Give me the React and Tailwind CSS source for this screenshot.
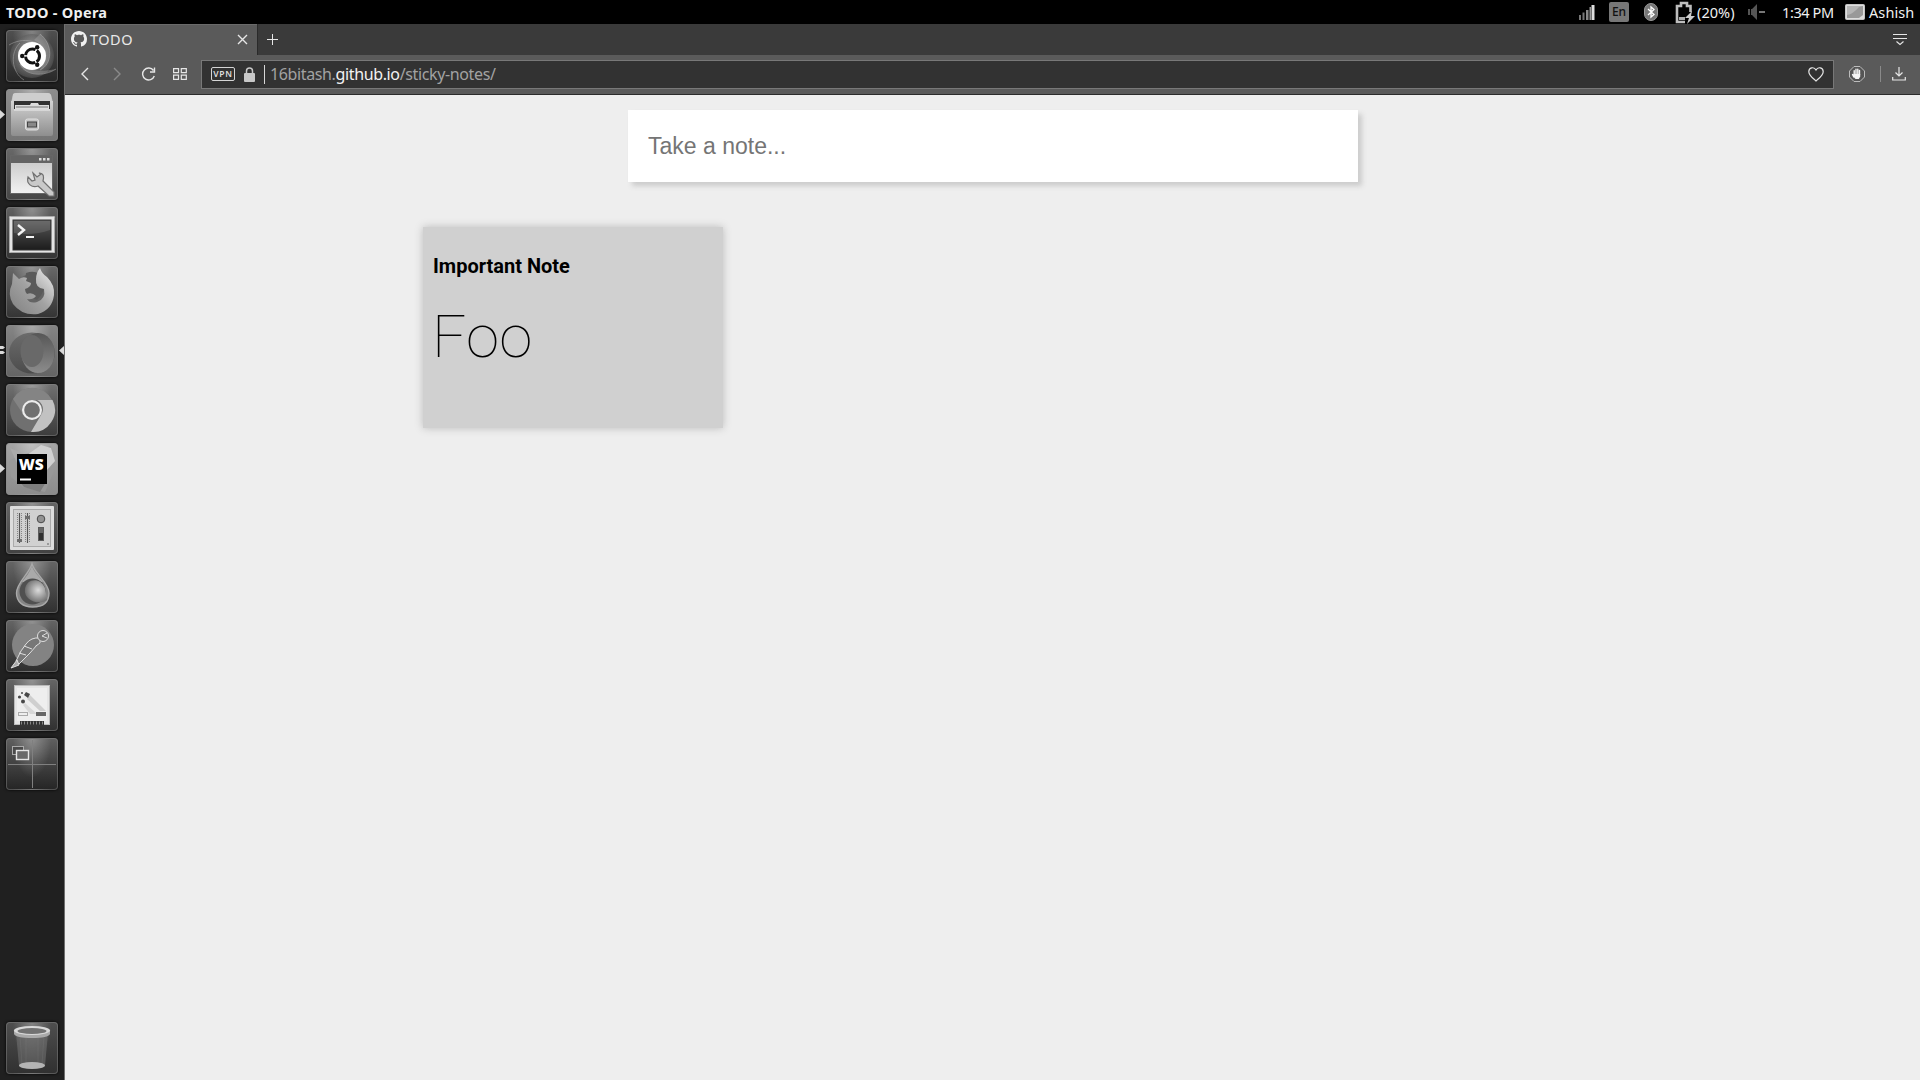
import React from 'react';

const UI = "font-['Noto_Sans','Open_Sans',sans-serif]";

function Defs() {
  return (
    <svg className="absolute w-0 h-0" aria-hidden="true">
      <defs>
        <linearGradient id="metal" x1="0" y1="0" x2="0" y2="1">
          <stop offset="0" stopColor="#d2d2d2" />
          <stop offset="0.5" stopColor="#b0b0b0" />
          <stop offset="1" stopColor="#8e8e8e" />
        </linearGradient>
        <linearGradient id="paper" x1="0" y1="0" x2="0" y2="1">
          <stop offset="0" stopColor="#c4c4c4" />
          <stop offset="1" stopColor="#f2f2f2" />
        </linearGradient>
        <linearGradient id="dark" x1="0" y1="0" x2="0" y2="1">
          <stop offset="0" stopColor="#585858" />
          <stop offset="1" stopColor="#1c1c1c" />
        </linearGradient>
        <linearGradient id="fox" x1="0" y1="1" x2="1" y2="0">
          <stop offset="0" stopColor="#808080" />
          <stop offset="0.5" stopColor="#a2a2a2" />
          <stop offset="1" stopColor="#f0f0f0" />
        </linearGradient>
        <linearGradient id="opera" x1="0" y1="0" x2="0" y2="1">
          <stop offset="0" stopColor="#6c6c6c" />
          <stop offset="1" stopColor="#4c4c4c" />
        </linearGradient>
        <linearGradient id="operaIn" x1="0" y1="0" x2="0" y2="1">
          <stop offset="0" stopColor="#565656" />
          <stop offset="1" stopColor="#8c8c8c" />
        </linearGradient>
        <radialGradient id="swirl" cx="0.5" cy="0.5" r="0.6">
          <stop offset="0.4" stopColor="#a8a8a8" />
          <stop offset="1" stopColor="#3c3c3c" />
        </radialGradient>
        <radialGradient id="drop" cx="0.6" cy="0.45" r="0.6">
          <stop offset="0" stopColor="#dcdcdc" />
          <stop offset="1" stopColor="#6c6c6c" />
        </radialGradient>
      </defs>
    </svg>
  );
}

const glyphs = {
  dash: (
    <>
      <circle cx="26" cy="26" r="22" fill="url(#swirl)" opacity="0.55" />
      <g fill="none" stroke="#b5b5b5" strokeWidth="0.8" opacity="0.6">
        <path d="M3 15C16 7 36 9 40 26" />
        <path d="M34 4C47 14 47 34 34 40" />
        <path d="M50 39C38 47 19 46 14 34" />
        <path d="M18 50C5 42 4 22 14 13" />
      </g>
      <path d="M34 4C47 14 47 34 34 40C42 28 42 18 28 10Z" fill="#aaa" opacity="0.4" />
      <path d="M50 39C38 47 19 46 14 34C24 42 36 42 50 39Z" fill="#999" opacity="0.45" />
      <circle cx="26" cy="26" r="14" fill="#fff" />
      <circle cx="26.500" cy="26" r="7" fill="none" stroke="#111" strokeWidth="3" strokeDasharray="13.200 1.460" strokeDashoffset="6.600" />
      <g fill="#111">
        <circle cx="16.200" cy="26" r="2.200" />
        <circle cx="31.200" cy="17.300" r="2.200" />
        <circle cx="31.200" cy="34.700" r="2.200" />
      </g>
    </>
  ),
  files: (
    <>
      <path d="M7 6Q8 4 10 4H42Q44 4 45 6L47 13V22H5V13Z" fill="#b8b8b8" />
      <path d="M7 5Q8 4 10 4H42Q44 4 45 6L46 12H6Z" fill="#cecece" />
      <rect x="8" y="12" width="36" height="9" fill="#303030" />
      <path d="M9 16H24L25 14H32L33 16H43V21H9Z" fill="#dcdcdc" />
      <path d="M10 18H42" stroke="#777" />
      <path d="M5 12H8V20H44V12H47V45Q47 47 45 47H7Q5 47 5 45Z" fill="url(#metal)" />
      <path d="M8 21H44" stroke="#eee" />
      <rect x="19.500" y="30" width="13" height="11" rx="2" fill="#c4c4c4" stroke="#e0e0e0" />
      <rect x="21.500" y="33" width="9" height="5" fill="#888" stroke="#444" />
    </>
  ),
  settings: (
    <>
      <rect x="4.500" y="7.500" width="42" height="38" fill="url(#paper)" stroke="#666" />
      <rect x="5" y="8" width="41" height="7" fill="#636363" />
      <g fill="#ddd">
        <rect x="33" y="10" width="2.500" height="2.500" />
        <rect x="37" y="10" width="2.500" height="2.500" />
        <rect x="41" y="10" width="2.500" height="2.500" />
      </g>
      <path d="M27 25L31 29L35 26L33 25C38 25 38 29 37 33L48 44V48H43L32 38C26 40 20 36 22 29L26 33L29 32Z" fill="#c9c9c9" stroke="#707070" strokeWidth="1.200" />
    </>
  ),
  terminal: (
    <>
      <rect x="3" y="9" width="46" height="37" rx="1.500" fill="#e4e4e4" />
      <rect x="3.500" y="9.500" width="45" height="36" rx="1" fill="none" stroke="#a9a9a9" />
      <rect x="7" y="13" width="38" height="30" fill="url(#dark)" stroke="#333" />
      <path d="M8 14H44V23Q28 29 8 26Z" fill="#fff" opacity="0.12" />
      <path d="M12 18L18 23L12 28" fill="none" stroke="#f4f4f4" strokeWidth="2.400" />
      <path d="M20 30H28" stroke="#f4f4f4" strokeWidth="2" />
    </>
  ),
  firefox: (
    <>
      <circle cx="26" cy="27" r="19" fill="#646464" />
      <path d="M20 7Q32 3 38 13Q40 26 31 34Q19 31 18 20Z" fill="#5a5a5a" />
      <path d="M7 7L13 13Q17 10 21 12L20 15L25 17Q25 21 19 23Q19 26 21 28Q26 26 30 30Q27 34 21 33Q24 38 31 36Q40 33 38 23Q29 22 30 13Q30 7 34 2Q36 8 41 11Q49 19 48 29Q46 44 32 48Q16 50 7 38Q1 28 6 18Z" fill="url(#fox)" />
    </>
  ),
  opera: (
    <>
      <ellipse cx="26" cy="28" rx="23" ry="20.500" fill="url(#opera)" />
      <ellipse cx="32" cy="28" rx="16.500" ry="20" fill="url(#operaIn)" />
      <ellipse cx="26" cy="26" rx="11.500" ry="16" fill="#696969" />
    </>
  ),
  chrome: (
    <>
      <circle cx="26" cy="26" r="22" fill="#707070" />
      <path d="M7 15A22 22 0 0 1 46 16H26A10 10 0 0 0 17 30Z" fill="#848484" />
      <path d="M46.500 16A22 22 0 0 1 25 48L35 31A10 10 0 0 0 31 16Z" fill="#c2c2c2" />
      <circle cx="26" cy="26" r="10" fill="#ececec" />
      <circle cx="26" cy="26" r="7.800" fill="#707070" />
    </>
  ),
  webstorm: (
    <>
      <path d="M3 18L14 12L29 9L45 3L48 28L39 49L17 44L5 34Z" fill="#999" />
      <path d="M21 12L35 2L45 5L49 18L41 27Z" fill="#d0d0d0" />
      <path d="M4 5L20 12L16 31Z" fill="#aaa" />
      <path d="M12 37L40 39L34 49L18 44Z" fill="#7d7d7d" />
      <rect x="11" y="11" width="30" height="30" fill="#000" />
      <text x="12.800" y="27" textLength="25" lengthAdjust="spacingAndGlyphs" fontFamily="Open Sans, sans-serif" fontWeight="800" fontSize="16" fill="#fff">WS</text>
      <path d="M14 36.500H25" stroke="#fff" strokeWidth="2" />
    </>
  ),
  mixer: (
    <>
      <rect x="4" y="4" width="44" height="44" rx="1" fill="#dcdcdc" />
      <rect x="7.500" y="7.500" width="37" height="37" fill="#d1d1d1" stroke="#aaa" />
      <g stroke="#858585" strokeDasharray="1 1" strokeWidth="5"><path d="M13.500 11V41M21.500 11V41" /></g>
      <path d="M13.500 11V41M21.500 11V41" stroke="#c8c8c8" strokeWidth="3" />
      <path d="M13.500 11V41M21.500 11V41" stroke="#555" />
      <path d="M11 37H16V40H11ZM19 14H24V17H19Z" fill="#6d6d6d" />
      <circle cx="35" cy="17" r="3.800" fill="#929292" stroke="#4a4a4a" />
      <rect x="32.500" y="25.500" width="5" height="13" fill="#303030" stroke="#5c5c5c" />
      <rect x="33" y="26" width="4" height="5" fill="#666" />
      <rect x="41" y="41" width="2" height="2" fill="#999" />
    </>
  ),
  drop: (
    <>
      <path d="M26 3C29 13 43 22 43 32C43 42 36 46 26.500 46C17 46 10.500 41 10.500 32C10.500 22 23 13 26 3Z" fill="#858585" stroke="#aaa" strokeWidth="1.400" />
      <path d="M26 5C28 12 34 16 37 21H16C20 16 24 11 26 5Z" fill="#aaa" />
      <circle cx="26.500" cy="30.500" r="13" fill="#505050" />
      <path d="M41 39C33 45 17 39 19 28C20 18 34 15 39 27" fill="url(#drop)" />
    </>
  ),
  postman: (
    <>
      <circle cx="27" cy="25" r="21" fill="#838383" />
      <g fill="#777" stroke="#dedede" strokeWidth="1">
        <path d="M34 18Q25 17 20 24L15 31L20 33L34 23Z" />
        <path d="M15 31L10 41L13 44L24 33L31 25" />
        <path d="M11 40L5 48L13 45Z" fill="#aaa" />
        <circle cx="37" cy="16" r="5.500" />
        <path d="M41 13L36 16L41 18M18 26L26 29M13 33L20 35" fill="none" />
      </g>
    </>
  ),
  image: (
    <>
      <rect x="8.500" y="6.500" width="35" height="39" fill="#e5e5e5" stroke="#bbb" />
      <rect x="11" y="9" width="30" height="33" fill="#eeeeee" />
      <path d="M24 16L40 32H34L21 20Z" fill="#cfcfcf" />
      <path d="M19 24L31 35H24L17 26Z" fill="#d8d8d8" />
      <g fill="#484848">
        <path d="M20 13L24 15L22 19L18 16Z" />
        <circle cx="13.500" cy="18" r="1.600" />
        <circle cx="17" cy="22.500" r="2" />
        <circle cx="16" cy="14" r="1" />
      </g>
      <rect x="12.500" y="33.500" width="9" height="3" fill="#eee" stroke="#aaa" />
      <rect x="30" y="33" width="10" height="4" fill="#666" />
      <rect x="14" y="42" width="24" height="4" fill="#333" />
      <path d="M15 44H37" stroke="#888" strokeWidth="3" strokeDasharray="1 2" />
    </>
  ),
  workspaces: (
    <>
      <path d="M26.500 2V50M2 26.500H50" stroke="#808080" />
      <rect x="6.500" y="8.500" width="11" height="8" fill="#4a4a4a" stroke="#aaa" />
      <rect x="10.500" y="12.500" width="12" height="9" fill="#696969" stroke="#e5e5e5" strokeWidth="1.400" />
    </>
  ),
  trash: (
    <>
      <path d="M10 11L13 44Q26 49 39 44L42 11Z" fill="#6e6e6e" opacity="0.6" />
      <path d="M14 14L16 42M20 14V42M32 14V42M38 14L36 42" stroke="#888" strokeWidth="0.500" opacity="0.400" />
      <ellipse cx="26" cy="43.500" rx="13" ry="3.500" fill="#b4b4b4" />
      <path d="M8 8V12Q10 16 26 16T44 12V8Z" fill="#a9a9a9" />
      <ellipse cx="26" cy="8.500" rx="18" ry="4.500" fill="#d8d8d8" />
      <ellipse cx="26" cy="9" rx="14.500" ry="3" fill="#727272" />
    </>
  ),
};

const launcher = [
  { name: 'dash', tone: 'from-[#505050] to-[#292929]' },
  { name: 'files', tone: 'from-[#8d8d8d] to-[#747474]', running: true },
  { name: 'settings', tone: 'from-[#686868] to-[#464646]' },
  { name: 'terminal', tone: 'from-[#626262] to-[#343434]' },
  { name: 'firefox', tone: 'from-[#696969] to-[#343434]' },
  { name: 'opera', tone: 'from-[#858585] to-[#646464]', active: true },
  { name: 'chrome', tone: 'from-[#717171] to-[#3c3c3c]' },
  { name: 'webstorm', tone: 'from-[#a5a5a5] to-[#8c8c8c]', running: true },
  { name: 'mixer', tone: 'from-[#656565] to-[#424242]' },
  { name: 'drop', tone: 'from-[#666666] to-[#303030]' },
  { name: 'postman', tone: 'from-[#656565] to-[#2e2e2e]' },
  { name: 'image', tone: 'from-[#666666] to-[#303030]' },
  { name: 'workspaces', tone: 'from-[#606060] to-[#252525]' },
];

function Tile({ name, tone, running, active }) {
  return (
    <div className={`relative h-[52px] w-[52px] shrink-0 rounded-[4px] bg-linear-to-b shadow-[0_0_3px_#000] ${tone}`}>
      <div className="absolute inset-0 rounded-[4px] border border-[#8a8a8a]/45 bg-[radial-gradient(ellipse_at_50%_0%,rgba(255,255,255,0.3),transparent_55%)]" />
      <svg className="relative block" width="52" height="52" viewBox="0 0 52 52">{glyphs[name]}</svg>
      {running && (
        <svg className="absolute -left-1.5 top-[21px]" width="5" height="9"><path d="M0 0L5 4.500L0 9Z" fill="#d9d9d9" /></svg>
      )}
      {active && (
        <>
          <svg className="absolute -left-1.5 top-[21px]" width="5" height="9"><path d="M0 0H3L5 1.500L3 3H0ZM0 5H3L5 6.500L3 8H0Z" fill="#d9d9d9" /></svg>
          <svg className="absolute left-[53px] top-[21px]" width="5" height="9"><path d="M5 0L0 4.500L5 9Z" fill="#d9d9d9" /></svg>
        </>
      )}
    </div>
  );
}

function TopPanel() {
  return (
    <header className={`flex h-6 w-full items-center bg-black text-[#f0f0f0] ${UI}`}>
      <h1 className="ml-1.5 flex-1 whitespace-nowrap text-[14.500px] font-bold leading-[23px] tracking-[0.28px]">TODO - Opera</h1>
      <svg width="16" height="16" viewBox="0 0 16 16" className="mr-3.5">
        <path d="M0 11H2V16H0Z" fill="#777" /><path d="M3.500 8.500H5.500V16H3.500Z" fill="#777" /><path d="M7 6H9.500V16H7Z" fill="#888" /><path d="M10.500 3H12V16H10.500Z" fill="#999" /><path d="M12.500 1H15.500V16H12.500Z" fill="#ddd" />
      </svg>
      <div className="mr-[15px] flex h-5 w-5 items-center justify-center rounded-[2px] bg-[#777] text-[12px] font-medium text-[#111]">En</div>
      <svg width="14" height="18" viewBox="0 0 14 18" className="mr-[17px]">
        <rect x="0.500" y="0.500" width="13" height="17" rx="6.500" fill="#777" stroke="#999" />
        <path d="M4 6L10 11.500L7 14V4L10 6.500L4 12" fill="none" stroke="#fff" strokeWidth="1.300" />
      </svg>
      <svg width="21" height="23" viewBox="0 0 21 23" className="mr-[2px]">
        <path d="M10 21H2V5H6V2H12V5H15.500V11" fill="none" stroke="#bdbdbd" strokeWidth="2.600" />
        <path d="M4 16H10V19H4Z" fill="#aaa" />
        <path d="M17 10L10 17H14L12 23L20 15H16Z" fill="#ccc" />
      </svg>
      <span className="-ml-px mr-[12px] w-[39px] whitespace-nowrap text-[14.500px] leading-6 tracking-[0.05px]">(20%)</span>
      <svg width="17" height="16" viewBox="0 0 17 16" className="mr-[17px]">
        <path d="M0 5H2V11H0ZM3 5H4L9 0V16L4 11H3Z" fill="#555" /><path d="M11 8H17" stroke="#777" strokeWidth="2" />
      </svg>
      <span className="mr-[11px] w-[52px] whitespace-nowrap text-[14.500px] leading-6 tracking-[-0.4px]">1:34 PM</span>
      <svg width="20" height="16" viewBox="0 0 20 16" className="mr-1">
        <rect x="0.500" y="0.500" width="19" height="15" rx="1" fill="#ddd" stroke="#c4c4c4" />
        <path d="M2 2H18V11L14 14H2Z" fill="#999" /><path d="M2 11Q8 10 14 3L18 2H2Z" fill="#b5b5b5" />
      </svg>
      <span className="mr-1.5 w-[45px] whitespace-nowrap text-[14.500px] leading-6 tracking-[0.1px]">Ashish</span>
    </header>
  );
}

const line = { fill: 'none', stroke: '#e6e6e6', strokeWidth: 1.4 };

function Browser() {
  return (
    <div className={UI}>
      <div className="flex h-[31px] items-center bg-[#3a3a3a]">
        <div className="flex h-full w-[192px] items-center border-t border-[#6a6a6a] bg-[#5a5a5a] pb-0.5">
          <svg className="ml-[6px]" width="16" height="16" viewBox="0 0 16 16" fill="#f0f0f0">
            <path d="M8 0C3.580 0 0 3.580 0 8c0 3.540 2.290 6.530 5.470 7.590.4.070.55-.17.55-.38 0-.19-.01-.82-.01-1.490-2.010.37-2.530-.49-2.690-.94-.09-.23-.48-.94-.82-1.130-.28-.15-.68-.52-.01-.53.63-.01 1.080.58 1.230.82.72 1.210 1.870.87 2.330.66.07-.52.28-.87.51-1.070-1.780-.2-3.640-.89-3.640-3.950 0-.87.31-1.590.82-2.150-.08-.2-.36-1.020.08-2.120 0 0 .67-.21 2.200.82.64-.18 1.320-.27 2-.27s1.360.09 2 .27c1.530-1.040 2.200-.82 2.200-.82.44 1.100.16 1.920.08 2.120.51.56.82 1.270.82 2.150 0 3.070-1.870 3.750-3.650 3.950.29.25.54.73.54 1.480 0 1.070-.01 1.930-.01 2.200 0 .21.15.46.55.38A8.010 8.010 0 0 0 16 8c0-4.420-3.580-8-8-8z" />
          </svg>
          <span className="ml-[3px] flex-1 text-[14.500px] leading-5 tracking-[0.5px] text-[#e9e9e9]">TODO</span>
          <svg className="mr-[9px]" width="11" height="11" viewBox="0 0 11 11" {...line}><path d="M1 1L10 10M10 1L1 10" /></svg>
        </div>
        <div className="h-full w-px bg-[#2a2a2a]" />
        <svg className="ml-[9px]" width="11" height="11" viewBox="0 0 11 11" {...line} strokeWidth="1"><path d="M5.500 0V11M0 5.500H11" /></svg>
        <svg className="ml-auto mr-[13px]" width="14" height="13" viewBox="0 0 14 13" {...line} strokeWidth="1.100"><path d="M0 1.500H14M0 5.500H14M3.500 8.500L7 11.500L10.500 8.500" /></svg>
      </div>
      <div className="flex h-10 items-center border-b border-[#2b2b2b] bg-[#5a5a5a] pb-px">
        <svg className="ml-4" width="8" height="14" viewBox="0 0 8 14" {...line}><path d="M7 1L1 7L7 13" /></svg>
        <svg className="ml-6" width="8" height="14" viewBox="0 0 8 14" {...line} stroke="#8a8a8a"><path d="M1 1L7 7L1 13" /></svg>
        <svg className="ml-[20px]" width="15" height="14" viewBox="0 0 15 14" {...line}><path d="M13.300 9A6 6 0 1 1 12.500 3.500M13.500 0.500V5H9" /></svg>
        <svg className="ml-[17px]" width="14" height="12" viewBox="0 0 14 12" {...line} strokeWidth="1.200"><path d="M.6.6H5.500V4.700H.6ZM8.300.6H13.300V4.700H8.300ZM.6 7.200H5.500V11.400H.6ZM8.300 7.200H13.300V11.400H8.300Z" /></svg>
        <div className="ml-[14px] flex h-[29px] w-[1633px] items-center border border-[#787878] bg-[#323232]">
          <div className="ml-[9px] flex h-[14px] w-6 items-center justify-center rounded-[2px] border border-[#d5d5d5] text-[8.500px] font-semibold tracking-[0.8px] text-[#dedede]">VPN</div>
          <svg className="ml-[9px]" width="11" height="15" viewBox="0 0 11 15"><rect y="6" width="11" height="9" rx="1" fill="#c8c8c8" /><path d="M2.500 7V4Q2.500 1 5.500 1T8.500 4V7" fill="none" stroke="#c8c8c8" strokeWidth="1.500" /></svg>
          <div className="ml-[9px] h-[19px] w-px bg-[#d6d6d6]" />
          <p className="ml-[5px] flex-1 whitespace-nowrap text-[16px] leading-6 tracking-[-0.37px] text-[#a2a2a2]">16bitash.<span className="text-[#f2f2f2]">github.io</span>/sticky-notes/</p>
          <svg className="mr-[9px]" width="16" height="15" viewBox="0 0 16 15" {...line} strokeWidth="1.200"><path d="M8 14C6 12 .8 8.500.8 4.700C.8.500 6-.7 8 3C10-.7 15.200.5 15.200 4.700C15.200 8.500 10 12 8 14Z" /></svg>
        </div>
        <svg className="ml-[15px]" width="16" height="16" viewBox="0 0 16 16">
          <path d="M5 .5H11L15.500 5V11L11 15.500H5L.5 11V5Z" fill="#555" stroke="#bcbcbc" />
          <g stroke="#f4f4f4" strokeLinecap="round" strokeWidth="1.400">
            <path d="M5.200 4.800V9M7 3.300V9M8.800 3.300V9M10.500 4.500V9M4.800 11L3.500 8.500" />
          </g>
          <path d="M4.500 8H11.200V10.500L9.800 13H6.500L4.300 10.500Z" fill="#f4f4f4" />
        </svg>
        <div className="ml-[15px] h-4 w-px bg-[#8a8a8a]" />
        <svg className="ml-[11px]" width="14" height="14" viewBox="0 0 14 14" {...line} strokeWidth="1.200"><path d="M7 0V9M3.500 5.500L7 9L10.500 5.500M.7 10V13H13.300V10" /></svg>
      </div>
    </div>
  );
}

export default function App() {
  return (
    <div className="flex h-[1080px] w-[1920px] flex-col overflow-hidden bg-[#eeeeee]">
      <Defs />
      <TopPanel />
      <div className="flex min-h-0 flex-1">
        <aside className="flex w-[65px] shrink-0 flex-col gap-[7px] border-r border-[#6e6e6e] bg-[#202020] pb-1.5 pl-1.5 pt-1.5">
          {launcher.map((item) => <Tile key={item.name} {...item} />)}
          <div className="mt-auto"><Tile name="trash" tone="from-[#4f4f4f] to-[#303030]" /></div>
        </aside>
        <div className="flex min-w-0 flex-1 flex-col">
          <Browser />
          <main className="flex flex-1 flex-col">
            <input
              className="ml-[563px] mt-[15px] h-[72px] w-[730px] bg-white px-5 font-['Liberation_Sans',Arial,sans-serif] text-[23px] shadow-[4px_4px_5px_#ccc] outline-none placeholder:text-[#757575]"
              placeholder="Take a note..."
            />
            <article className="ml-[358px] mt-[45px] h-[201px] w-[300px] bg-[#d0d0d0] px-2.5 font-[Roboto,sans-serif] text-black shadow-[0_0_8px_#bbb]">
              <h2 className="pt-[26px] text-[20px] font-bold leading-[26px]">Important Note</h2>
              <p className="-ml-px mt-[23px] text-[60px] font-thin leading-[70px] tracking-[0.2px]">Foo</p>
            </article>
          </main>
        </div>
      </div>
    </div>
  );
}
